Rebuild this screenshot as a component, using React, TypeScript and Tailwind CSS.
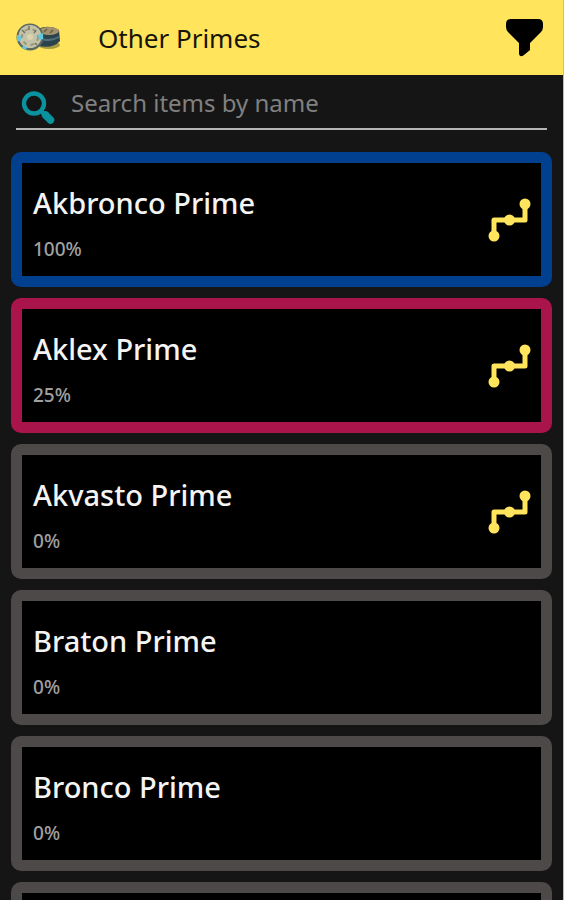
type Item = { name: string; progress: number; tone: string; hasParts: boolean };

const items: Item[] = [
  { name: "Akbronco Prime", progress: 100, tone: "border-[#00408f]", hasParts: true },
  { name: "Aklex Prime", progress: 25, tone: "border-[#a9144a]", hasParts: true },
  { name: "Akvasto Prime", progress: 0, tone: "border-[#4c4948]", hasParts: true },
  { name: "Braton Prime", progress: 0, tone: "border-[#4c4948]", hasParts: false },
  { name: "Bronco Prime", progress: 0, tone: "border-[#4c4948]", hasParts: false },
];

function RelicIcon() {
  return (
    <svg viewBox="0 0 46 30" className="h-[30px] w-[46px]" aria-hidden="true">
      <ellipse cx="33" cy="22" rx="11" ry="4" fill="#a69a43" />
      <path d="M22 6Q33 1 43 7L44 18Q37 26 22 23Z" fill="#2b434d" />
      <ellipse cx="33" cy="8" rx="10" ry="4" fill="#a1926c" />
      <path d="M28 9l3-3M34 10l3-3" stroke="#6b5f43" strokeWidth="1.5" />
      <path d="M26 16q8 3 17-2" fill="none" stroke="#4f707b" strokeWidth="2" />
      <circle cx="14" cy="14" r="13.500" fill="#5c6a62" />
      <circle cx="14" cy="13.500" r="11.500" fill="#c4c2a8" />
      <circle cx="14" cy="14" r="8" fill="none" stroke="#9a9779" strokeWidth="2" strokeDasharray="4 4" />
      <path d="M1 12l4 1v4l-4 2zM22 12l5-2v6l-4 1zM7 23l4 1-1 3-4-2z" fill="#60c8df" />
      <circle cx="14" cy="14" r="3" fill="#d9d4b0" />
      <path d="M13 3v4M6 7l3 3M20 7l-2 3M19 20l2 2" stroke="#77725b" strokeWidth="1.5" />
    </svg>
  );
}

function FilterIcon() {
  return (
    <svg viewBox="0 0 37 38" className="h-[38px] w-[37px]" aria-hidden="true">
      <path d="M5 0H32Q37 0 37 5V8Q37 11 35 13L24 24V31L18 36Q14 39 13 35V24L2 13Q0 11 0 8V5Q0 0 5 0Z" fill="#000" />
    </svg>
  );
}

function SearchIcon() {
  return (
    <svg viewBox="0 0 34 34" className="mt-1 h-[34px] w-[34px] shrink-0" aria-hidden="true">
      <circle cx="13" cy="12.5" r="10" fill="none" stroke="#0a929f" strokeWidth="4.4" />
      <path d="M19 19l4 4" stroke="#0a929f" strokeWidth="4" />
      <path d="M24.500 24l5 5" stroke="#0a929f" strokeWidth="7.500" strokeLinecap="round" />
    </svg>
  );
}

function PartsIcon() {
  return (
    <svg viewBox="0 0 44 44" className="h-[44px] w-[44px]" aria-hidden="true">
      <path d="M6 38V22H37V6" fill="none" stroke="#ffe45c" strokeWidth="5" strokeLinejoin="round" />
      <g fill="#ffe45c">
        <circle cx="6" cy="38" r="5.500" />
        <circle cx="21.500" cy="22" r="5.500" />
        <circle cx="37" cy="6" r="5.500" />
      </g>
    </svg>
  );
}

function ItemCard({ item }: { item: Item }) {
  return (
    <li className={`shrink-0 rounded-[10px] border-[11px] ${item.tone}`}>
      <article className="flex h-[113px] items-center justify-between bg-black pr-[9px] pl-[11px]">
        <div className="pt-1.5">
          <h2 className="text-[29px] leading-10 font-medium text-[#f4f4f4]">{item.name}</h2>
          <p className="mt-3 text-[19px] leading-7 font-medium text-[#a0a0a0]">{item.progress}%</p>
        </div>
        {item.hasParts && (
          <button type="button" aria-label={`Components of ${item.name}`}>
            <PartsIcon />
          </button>
        )}
      </article>
    </li>
  );
}

function PlaceholderCard() {
  return (
    <li aria-hidden="true" className="shrink-0 rounded-[10px] border-[11px] border-[#4c4948]">
      <div className="h-[113px] bg-black" />
    </li>
  );
}

export default function App() {
  return (
    <div className="flex h-screen flex-col overflow-hidden border-r border-[#bbb] bg-[#151515] font-['Noto_Sans',sans-serif]">
      <header className="flex h-[75px] shrink-0 items-center bg-[#ffe45c] pr-5 pl-4">
        <RelicIcon />
        <h1 className="ml-9 flex-1 text-[26px] leading-9 text-[#171408]">Other Primes</h1>
        <button type="button" aria-label="Filter items">
          <FilterIcon />
        </button>
      </header>
      <label className="mx-4 mt-2 flex h-[47px] shrink-0 items-center border-b-2 border-[#b5b5b5] pl-[5px]">
        <SearchIcon />
        <input
          type="text"
          aria-label="Search items by name"
          placeholder="Search items by name"
          className="mb-1.5 ml-4 min-w-0 flex-1 bg-transparent text-[24px] leading-9 text-white outline-none placeholder:text-[#808080]"
        />
      </label>
      <ul className="mt-[22px] flex min-h-0 flex-1 flex-col gap-[11px] overflow-y-auto px-[11px] [scrollbar-width:none]">
        {items.map((item) => (
          <ItemCard key={item.name} item={item} />
        ))}
        <PlaceholderCard />
      </ul>
    </div>
  );
}
